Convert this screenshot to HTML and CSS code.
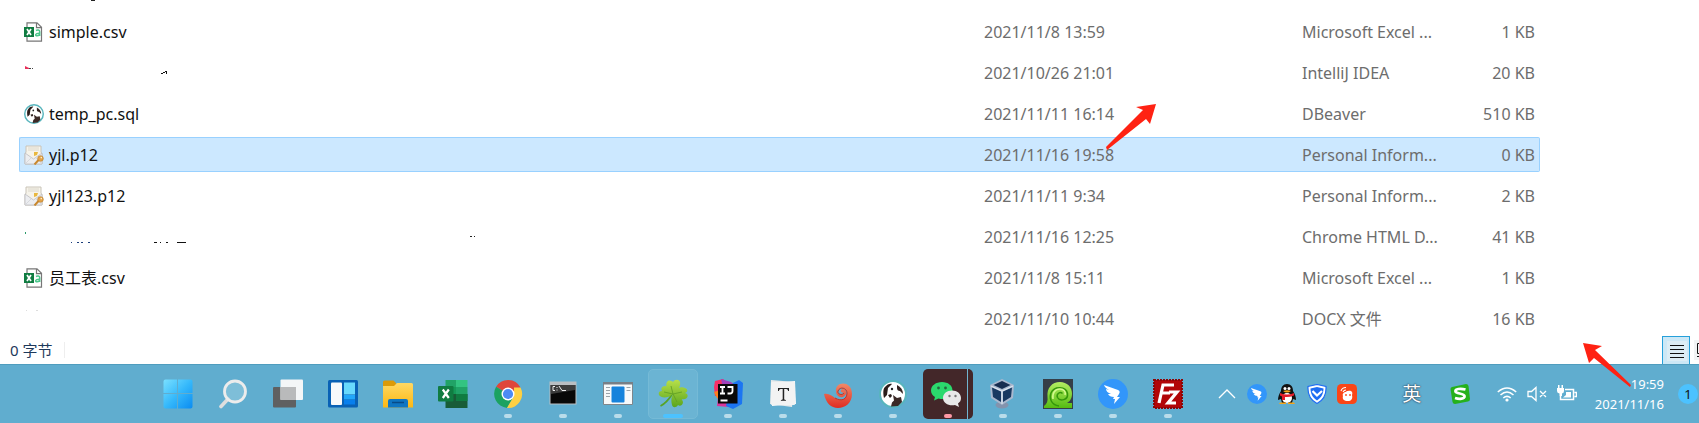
FILE: index.html
```
<!DOCTYPE html>
<html lang="zh-CN">
<head>
  <meta charset="UTF-8">
  <meta name="viewport" content="width=device-width, initial-scale=1.0">
  <title>Explorer</title>
  <link rel="stylesheet" href="styles.css">
</head>
<body>

  <!-- shared icons -->
  <svg class="defs" aria-hidden="true">
    <defs>
      <linearGradient id="winBlue" x1="0" y1="0" x2="1" y2="1">
        <stop offset="0" stop-color="#7ae0ff"/><stop offset=".5" stop-color="#36b9fb"/><stop offset="1" stop-color="#0a8cf2"/>
      </linearGradient>
      <linearGradient id="folder" x1="0" y1="0" x2="0" y2="1">
        <stop offset="0" stop-color="#ffd863"/><stop offset="1" stop-color="#fdb813"/>
      </linearGradient>
      <linearGradient id="leaf" x1="0" y1="0" x2="0" y2="1">
        <stop offset="0" stop-color="#b8e04a"/><stop offset="1" stop-color="#5aa51e"/>
      </linearGradient>
      <linearGradient id="shell" x1="0" y1="0" x2="0" y2="1">
        <stop offset="0" stop-color="#f08a68"/><stop offset="1" stop-color="#e02b22"/>
      </linearGradient>
      <linearGradient id="lime" x1="0" y1="0" x2="0" y2="1">
        <stop offset="0" stop-color="#b4ee62"/><stop offset="1" stop-color="#55bb12"/>
      </linearGradient>
      <symbol id="csv" viewBox="0 0 20 20">
        <path d="M3 .8h10l4.500 4.400v14H3z" fill="#fff" stroke="#777" stroke-width="1.200"/>
        <path d="M12.500 1v4.700h5" fill="none" stroke="#777" stroke-width="1.200"/>
        <path d="M0 5h10v10H0z" fill="#107c41"/>
        <path d="M3 7l4 6M7 7l-4 6" stroke="#fff" stroke-width="1.700"/>
        <path d="M12 8.500c1.300-.8 3.700-.7 3.700 1.200v4.300M15.700 11.200c-5-.3-4.700 2.800-2.600 2.600 1.500 0 2.600-1 2.600-2" fill="none" stroke="#4cc88c" stroke-width="1.500"/>
      </symbol>
      <symbol id="beaver" viewBox="0 0 28 28">
        <circle cx="14" cy="14" r="13" fill="#fff" stroke="#58b5bd" stroke-width="2"/>
        <path d="M6 7c2-3 6-4 7-3L9 8l-1 7-3 3c-1-5-1-9 1-11z" fill="#2b1d1a"/>
        <path d="M14 15l4 3 4-1 1 5-4 4-7 .500 1-4 2-2z" fill="#3b2926"/>
        <path d="M18 5c4 2 6 5 6 9l-3-3c-2 0-3-1-3-3z" fill="#32211f"/>
        <circle cx="13" cy="9" r="1.200" fill="#222"/>
        <path d="M9 15l3-1 1 2-2 2z" fill="#2b1d1a"/>
      </symbol>
      <symbol id="cert" viewBox="0 0 20 20">
        <path d="M2 7V1h15v6l1 2v10H1V9z" fill="#f6f3ea" stroke="#c9c4b8"/>
        <path d="M4 3h11M4 5h11" stroke="#dcd8cc"/>
        <path d="M10 7h4l-1 3-3 1z" fill="#e9b83e"/>
        <path d="M1 8l8.500 6L18 8v11H1z" fill="#ecedf0" stroke="#bcbcc2" stroke-width=".8"/>
        <path d="M1 19l6.500-6.500M18 19l-6.500-6.500" stroke="#d2d3d8" stroke-width=".8"/>
        <path d="M15 14.500l-4.500 5" stroke="#c9882e" stroke-width="2"/>
        <circle cx="16.500" cy="13.500" r="2.800" fill="#e3a348" stroke="#b77a27" stroke-width=".6"/>
        <circle cx="17.300" cy="12.600" r=".8" fill="#fff2cf"/>
      </symbol>
      <symbol id="wing" viewBox="0 0 30 30">
        <circle cx="15" cy="15" r="15" fill="#3296fa"/>
        <path d="M6 6l14 5c2 1 2 2 1 4l-2 3h3l-6 7 1-5h-2l1-2c-3 0-5-1-6-3l3 0c-3-1-5-3-5-5l3 1C8 9 6.500 8 6 6z" fill="#fff"/>
      </symbol>
    </defs>
  </svg>

  <!-- file list -->
  <main class="explorer">
    <svg class="cut-line" viewBox="0 0 8 2" aria-hidden="true"><path d="M1 0h4v1H1z" fill="#222"/></svg>
    <table class="files">
      <colgroup><col><col class="col-date"><col class="col-type"><col class="col-size"></colgroup>
      <tbody>
        <tr>
          <td><div class="name"><svg class="file-icon"><use href="#csv"/></svg>simple.csv</div></td>
          <td>2021/11/8 13:59</td><td>Microsoft Excel ...</td><td class="size">1 KB</td>
        </tr>
        <tr>
          <td><svg class="scraps" viewBox="0 0 460 20" aria-hidden="true"><path d="M1 3l4 2v1H1z" fill="#e8305a"/><path d="M5 5h2v1H5zM8 5h1v1H8z" fill="#444"/><path d="M137 10h2v1h-2zM139 9h2v1h-2zM141 8h2v3h-1V9h-1z" fill="#111"/></svg></td>
          <td>2021/10/26 21:01</td><td>IntelliJ IDEA</td><td class="size">20 KB</td>
        </tr>
        <tr>
          <td><div class="name"><svg class="file-icon"><use href="#beaver"/></svg>temp_pc.sql</div></td>
          <td>2021/11/11 16:14</td><td>DBeaver</td><td class="size">510 KB</td>
        </tr>
        <tr class="selected">
          <td><div class="name"><svg class="file-icon"><use href="#cert"/></svg>yjl.p12</div></td>
          <td>2021/11/16 19:58</td><td>Personal Inform...</td><td class="size">0 KB</td>
        </tr>
        <tr>
          <td><div class="name"><svg class="file-icon"><use href="#cert"/></svg>yjl123.p12</div></td>
          <td>2021/11/11 9:34</td><td>Personal Inform...</td><td class="size">2 KB</td>
        </tr>
        <tr>
          <td><svg class="scraps" viewBox="0 0 460 20" aria-hidden="true"><path d="M1 5h1v2H1z" fill="#2c9a6a"/><path d="M446 9h2v1h-2zM450 9h1v1h-1z" fill="#222"/><path d="M47 15h1v1h-1zM53 15h2v1h-2zM57 15h2v1h-2zM64 15h2v1h-2z" fill="#1b3d7a"/><path d="M130 15h3v1h-3zM136 15h1v1h-1zM142 15h2v1h-2zM153 15h9v1h-9z" fill="#111"/></svg></td>
          <td>2021/11/16 12:25</td><td>Chrome HTML D...</td><td class="size">41 KB</td>
        </tr>
        <tr>
          <td><div class="name"><svg class="file-icon"><use href="#csv"/></svg>员工表.csv</div></td>
          <td>2021/11/8 15:11</td><td>Microsoft Excel ...</td><td class="size">1 KB</td>
        </tr>
        <tr>
          <td><svg class="scraps" viewBox="0 0 460 20" aria-hidden="true"><path d="M2 1h1v1H2zM12 1h2v1h-2z" fill="#ddd"/></svg></td>
          <td>2021/11/10 10:44</td><td>DOCX 文件</td><td class="size">16 KB</td>
        </tr>
      </tbody>
    </table>
    <svg class="arrow arrow-list" viewBox="0 0 52 48" aria-hidden="true"><path d="M51 1L31 4l7 3L1 44l1 3 39-31 4 5z"/></svg>
  </main>

  <footer class="status">
    <span class="status-text">0 字节</span>
    <button class="view active" aria-label="详细信息"><svg viewBox="0 0 20 20"><path d="M3 4.500h14M3 8.500h14M3 12.500h14M3 16.500h14" stroke="#111" stroke-width="1"/></svg></button>
    <button class="view view-large" aria-label="大图标"><svg viewBox="0 0 20 20"><path d="M3.500 3.500h13v10h-13zM3 16.500h14" fill="none" stroke="#111"/></svg></button>
  </footer>

  <nav class="taskbar">
    <div class="apps">
      <button class="app" aria-label="开始"><svg viewBox="0 0 30 30"><path d="M2.500.500H14V14H.500V2.500a2 2 0 0 1 2-2zM15 .500h12.500a2 2 0 0 1 2 2V14H15zM.500 15H14v14.500H2.500a2 2 0 0 1-2-2zM15 15h14.500v12.500a2 2 0 0 1-2 2H15z" fill="url(#winBlue)"/></svg></button>
      <button class="app" aria-label="搜索"><svg viewBox="0 0 30 30"><path d="M10 20l-7 7.500" stroke="#dedede" stroke-width="3.600" stroke-linecap="round"/><circle cx="17" cy="12.500" r="10.500" fill="#9ccfe2" fill-opacity=".5" stroke="#ececec" stroke-width="2.800"/></svg></button>
      <button class="app" aria-label="任务视图"><svg viewBox="0 0 30 30"><rect y="8" width="23" height="20.500" rx="1" fill="#5f6061"/><rect x="7.500" y=".500" width="22.500" height="20.500" rx="1" fill="#f4f6f7"/><path d="M7.500 8H23v13H7.500z" fill="#b9babb"/></svg></button>
      <button class="app" aria-label="小组件"><svg viewBox="0 0 30 30"><rect y="1" width="30" height="27.500" rx="1.500" fill="#0961b5"/><rect x="3" y="3.500" width="11" height="22.500" rx="1" fill="#f7f9fb"/><path d="M16 3.500h11v12H16z" fill="#68d9fd"/><path d="M16 16h11v4.500H16z" fill="#22a7fa"/><path d="M16 21h11v4.500H16z" fill="#087fed"/></svg></button>
      <button class="app" aria-label="文件资源管理器"><svg viewBox="0 0 30 30"><path d="M0 7V3a1.500 1.500 0 0 1 1.500-1.500h9L13 4v4H0z" fill="#dc9a08"/><path d="M0 7h11l3-3h14.500A1.500 1.500 0 0 1 30 5.500v23H0z" fill="url(#folder)"/><path d="M5 28.500V22a2 2 0 0 1 2-2h16a2 2 0 0 1 2 2v6.500z" fill="#0f75c2"/><path d="M9 23.500h12" stroke="#084b87" stroke-width="1.500"/></svg></button>
      <button class="app" aria-label="Excel"><svg viewBox="0 0 30 30"><path d="M7.500 1H18v9H7.500z" fill="#21a366"/><path d="M18 1h11.500v7H18z" fill="#33c481"/><path d="M7.500 8H18v7H7.500z" fill="#159957"/><path d="M18 8h11.500v7H18z" fill="#21a366"/><path d="M7.500 15h22v14h-22z" fill="#185c37"/><path d="M18 15h11.500v7H18z" fill="#107c41"/><rect y="7" width="15.500" height="15.500" rx="1" fill="#107c41"/><path d="M4.800 10.500l6 8.500M10.800 10.500l-6 8.500" stroke="#fff" stroke-width="2.200"/></svg></button>
      <button class="app running" aria-label="Chrome"><svg viewBox="0 0 30 30"><path d="M15 15L3.100 7.800A14 14 0 0 1 27.500 8.500z" fill="#df463a"/><path d="M3.100 7.800A14 14 0 0 0 14 28.900L20.500 18 15 15z" fill="#1ba261"/><path d="M27.500 8.500A14 14 0 0 1 14 28.900L21 17V8.500z" fill="#ffd042"/><circle cx="15" cy="15" r="6.500" fill="#fff"/><circle cx="15" cy="15" r="5.100" fill="#4c8bf5"/></svg></button>
      <button class="app running" aria-label="命令提示符"><svg viewBox="0 0 30 30"><path d="M1.500 2.500h27v23h-27z" fill="#b9bec2"/><path d="M2.500 6h25v18.500h-25z" fill="#080808"/><path d="M3 6h24v5L3 15z" fill="#3c3c3c"/><path d="M7 7.500H5v4h2M9 8v1M9 10.500v1M11 7l3 4.500M14 11.500h4" fill="none" stroke="#eee"/></svg></button>
      <button class="app running" aria-label="应用窗口"><svg viewBox="0 0 30 30"><path d="M.500 3.500h29v22H.500z" fill="#f7f9fa" stroke="#7f868b"/><path d="M0 3h30v2.500H0z" fill="#777f87"/><rect x="8.500" y="7.500" width="13" height="16" rx="1" fill="#1683dc"/><path d="M3 8.500h4M3 11.500h4M3 14.500h4M3 17.500h4M23.500 8.500h4M23.500 11.500h4" stroke="#9ca4aa"/></svg></button>
      <button class="app running current" aria-label="三叶草"><svg viewBox="0 0 30 30"><path d="M15 14C13 17 9 24 2.500 27" fill="none" stroke="#58a326" stroke-width="1.800"/><path d="M15 15C9 12 7 6 9 3c2-3 5-1 6 0 2-3 6-3 7 0 1 4-2 9-7 12zM15 15C9 20 3 19 1 16c-1-3 1-4 3-4-2-3 1-5 3-5 4 1 7 4 8 8zM15 15c2-5 8-8 12-6 3 1 3 4 0 5 4 1 3 5 0 6-4 1-9-1-12-5zM15 15c5 1 9 4 10 8 0 3-3 5-5 3-2 3-5 3-6 0-1-4-1-7 1-11z" fill="url(#leaf)"/><path d="M15 15L13 7M15 15l-9-2M15 15l9-2M15 15l4 8" stroke="#5e9d24" stroke-width=".8"/></svg></button>
      <button class="app running" aria-label="IntelliJ IDEA"><svg viewBox="0 0 30 30"><path d="M2 2l8-2 10 9-9 8H2L1 8z" fill="#f62f68"/><path d="M1 13l6-2 4 13-7-5z" fill="#fc801d"/><path d="M5 18l8 2 3 8-12-1z" fill="#d9359a"/><path d="M18 5l8-4 4 3-1 21-9 5-7-3z" fill="#1b75f2"/><path d="M8 0l10 3 7 6H10z" fill="#a142bc"/><rect x="5" y="5" width="19.500" height="19.500" fill="#090909"/><path d="M7 8h5M9.500 8v6.500M7 14.500h5M14.500 8h5v4q0 2.500-2.500 2.500h-2.500M7.500 21.500h7" fill="none" stroke="#fff" stroke-width="1.800"/></svg></button>
      <button class="app running" aria-label="Typora"><svg viewBox="0 0 30 30"><path d="M3 1l24 2-3 25-22-3z" fill="#e7eaeb"/><path d="M4 4l23-2 1 23-24 2z" fill="#fafafa"/><rect x="3" y="3" width="24" height="23" rx="1" fill="#f3f3f3"/><path d="M10 12V9h11v3h-.800q-.300-2-2-2H16.200v10q0 1 1.700 1v.800h-5V21q1.800 0 1.800-1V10h-2q-1.600 0-1.900 2z" fill="#222"/></svg></button>
      <button class="app running" aria-label="Navicat"><svg viewBox="0 0 30 30"><path d="M1 15c5-1 8 2 11 4 6 4 12 1 12-5 0-5-7-7-9-2-1 3 4 5 6 2-2-1-4-1-3-3 2-3 6 0 5 4-2 5-10 4-10-3C12 2 29 1 29 15c0 9-7 14-14 14S3 24 1 15z" fill="url(#shell)"/><path d="M12 19c7 4 12 1 12-5 0-5-7-7-9-2-1 3 4 5 6 2" fill="none" stroke="#bd3529" stroke-width="1"/></svg></button>
      <button class="app running" aria-label="DBeaver"><svg viewBox="0 0 30 30"><use href="#beaver" x="1" y="1" width="28" height="28"/></svg></button>
      <button class="app running alert" aria-label="微信"><svg viewBox="0 0 30 30"><path d="M11 3C5 3 0 6.500 0 11.500c0 3 1.500 5 4 6.500l-1 3.500 4.500-2c8 2 14-2 14-8C21.500 6.500 17 3 11 3z" fill="#2bd96d"/><path d="M21 11.500c-5 0-9 3-9 7.500 0 5 6 8.500 12 7l4 2-1-3.500c2-1.500 3-3 3-5.500 0-4.500-4-7.500-9-7.500z" fill="#e8e8e8"/><circle cx="7.500" cy="9" r="1.400" fill="#25683f"/><circle cx="14.500" cy="9" r="1.400" fill="#25683f"/><circle cx="18.500" cy="17" r="1.200" fill="#777"/><circle cx="24.500" cy="17" r="1.200" fill="#777"/></svg></button>
      <button class="app running" aria-label="VirtualBox"><svg viewBox="0 0 30 30"><ellipse cx="14" cy="26" rx="6.500" ry="3.500" fill="#8393ad"/><path d="M2 6L14 0l12 6-1 13-11 7-11-7z" fill="#a9b8ce"/><path d="M5.500 6L14 2l8.500 4L14 10z" fill="#172d50"/><path d="M4 8.500l9 4V23l-8-5zM24 8.500l-9 4V23l8-5z" fill="#193961"/><path d="M3 7l11 5 11-5M14 12v13" fill="none" stroke="#dde5ef" stroke-width="1.200"/></svg></button>
      <button class="app running" aria-label="螺旋"><svg viewBox="0 0 30 30"><path d="M0 0h30v30H0z" fill="#353e48"/><path d="M1 29V27c3-2 4-5 3.500-9C3.500 9 9 3 17 3c7 0 12 5 12 11.500 0 5-2 8-5 9.500h5v5z" fill="url(#lime)"/><path d="M16 27c-8-1-10-8-8-13 3-7 15-7 16.500.500C25.500 21 17 23 14.500 18.500 13 15 17 12 19.500 14.500" fill="none" stroke="#35960c" stroke-width="1.500"/><path d="M10 20c-1-6 2-10 7-10 4 0 6 3 5 6" fill="none" stroke="#d4fa8f" stroke-width="1.500"/></svg></button>
      <button class="app running" aria-label="钉钉"><svg viewBox="0 0 30 30"><use href="#wing"/></svg></button>
      <button class="app running" aria-label="FileZilla"><svg viewBox="0 0 30 30"><path d="M1 1h28v28H1z" fill="#b20608" stroke="#8c0507" stroke-width="2" stroke-dasharray="2 1"/><path d="M6 24L10 6h11M8.500 14H17M16 13h8l-9 11h8" fill="none" stroke="#fff" stroke-width="3.200"/></svg></button>
    </div>

    <div class="tray">
      <button class="tray-item" aria-label="显示隐藏的图标"><svg viewBox="0 0 20 20"><path d="M2 14l8-8 8 8" fill="none" stroke="#fff" stroke-width="1.300"/></svg></button>
      <button class="tray-item" aria-label="钉钉"><svg viewBox="0 0 20 20"><use href="#wing"/></svg></button>
      <button class="tray-item" aria-label="QQ"><svg viewBox="0 0 20 20"><path d="M10 0c4 0 6 3 6 7 2 3 3 6 3 9l-3-1-1 4H5l-1-4-3 1c0-3 1-6 3-9 0-4 2-7 6-7z" fill="#111"/><ellipse cx="10" cy="14" rx="5" ry="5" fill="#fff"/><circle cx="8" cy="4.500" r="1.500" fill="#fff"/><circle cx="12" cy="4.500" r="1.500" fill="#fff"/><path d="M6 7q4-1.500 8 0-4 3-8 0z" fill="#f5a51b"/><path d="M3 9q7 3 14 0v2.500q-5 2-9 1.500v3H5v-3.500l-2-1z" fill="#e31c2a"/><path d="M3 18.500h6v1.500H2zM11 18.500h6l1 1.500h-7z" fill="#f5a51b"/></svg></button>
      <button class="tray-item" aria-label="电脑管家"><svg viewBox="0 0 20 20"><path d="M10 .500l9 2C19.500 10 17 16 10 19.500 3 16 .500 10 1 2.500z" fill="#fff" stroke="#1f6df2" stroke-width="1.200"/><path d="M10 3l6.500 1.500c0 5-2 9-6.500 12-4.500-3-6.500-7-6.500-12z" fill="#1f6df2"/><path d="M5.500 7l4.500 4.500L15 7" fill="none" stroke="#fff" stroke-width="2.200"/></svg></button>
      <button class="tray-item" aria-label="向日葵"><svg viewBox="0 0 20 20"><rect width="20" height="20" rx="4.500" fill="#fb4617"/><path d="M11 7c4-1 5 2 4 4 1 4-1 6-4 6-4 0-6-2-5-5-1-2 1-4 3-4 0-1 1-1 2-1z" fill="#fff"/><path d="M4 7q1-3.500 5-3.500M6 8q1-2 3-2" fill="none" stroke="#fff" stroke-width="1.100"/><circle cx="9" cy="11" r=".9" fill="#fb4617"/><circle cx="13" cy="11" r=".9" fill="#fb4617"/></svg></button>
      <button class="tray-item ime" aria-label="输入法">英</button>
      <button class="tray-item sogou" aria-label="搜狗输入法"><svg viewBox="0 0 20 20"><path d="M2 3l14-3q2 0 2.500 2L20 15q0 2-2 2.500L5 20q-2 0-2.500-2L.500 5Q.500 3.500 2 3z" fill="#25b11c"/><path d="M15.500 5.500C10 4 5 5 5.500 7.500 6 10 14 9 14.500 12c.500 3-5 3.500-9.500 2" fill="none" stroke="#fff" stroke-width="2.800"/></svg></button>
      <button class="tray-item" aria-label="网络"><svg viewBox="0 0 20 20"><g fill="none" stroke="#fff" stroke-width="1.500"><path d="M.800 8q9.200-8 18.400 0M3.500 11q6.500-6 13 0M6.300 14q3.700-3.300 7.400 0"/></g><circle cx="10" cy="16" r="1.600" fill="#fff"/></svg></button>
      <button class="tray-item" aria-label="音量"><svg viewBox="0 0 20 20"><path d="M1 7.500h3.500L9 3.500v13l-4.500-4H1zM13 7l6 6M19 7l-6 6" fill="none" stroke="#fff" stroke-width="1.300"/></svg></button>
      <button class="tray-item" aria-label="电池"><svg viewBox="0 0 20 20"><path d="M8 5.500h8.500v10h-13V12M17.500 8.500h2v4h-2" fill="none" stroke="#fff" stroke-width="1.500"/><path d="M9 8h5v5.500H6L9 11z" fill="#fff"/><path d="M0 4h7v3q0 2-2 2.500V12H2.500V9.500Q0 9 0 7zM1 1h1.500v3H1zM4.500 1H6v3H4.500z" fill="#fff"/></svg></button>
      <button class="clock"><span>19:59</span><span>2021/11/16</span></button>
      <button class="badge" aria-label="1 条通知">1</button>
    </div>
    <svg class="arrow arrow-clock" viewBox="0 0 50 48" aria-hidden="true"><path d="M1 1l19 3-7 4 36 35-1 2L12 16l-5 5z"/></svg>
  </nav>

</body>
</html>
```

FILE: styles.css
```
* { box-sizing: border-box; }
body {
  margin: 0;
  background: #fff;
  font-family: "Noto Sans", "Noto Sans CJK SC", sans-serif;
  font-size: 16px;
  color: #111;
  overflow: hidden;
}
button {
  padding: 0;
  border: none;
  background: none;
  font: inherit;
  color: inherit;
  cursor: pointer;
}
svg { display: block; }
.defs {
  position: absolute;
  width: 0;
  height: 0;
}

/* file list */
.explorer {
  position: relative;
  padding: 8px 159px 0 19px;
}
.cut-line {
  position: absolute;
  top: 0;
  left: 90px;
  width: 8px;
  height: 2px;
}
.files {
  width: 100%;
  table-layout: fixed;
  border-spacing: 0 6px;
  color: #6d6d6d;
}
.col-date { width: 318px; }
.col-type { width: 141px; }
.col-size { width: 102px; }
.files td {
  height: 35px;
  padding: 0 4px 0 5px;
  border: solid transparent;
  border-width: 1px 0;
  line-height: 24px;
  white-space: nowrap;
}
.files td:first-child {
  padding-left: 4px;
  border-left-width: 1px;
}
.files td:last-child { border-right-width: 1px; }
.files .size { text-align: right; }
.files .selected td {
  background: #cce8ff;
  border-color: #99d1ff;
}
.selected td:first-child { border-radius: 2px 0 0 2px; }
.selected td:last-child { border-radius: 0 2px 2px 0; }
.name {
  display: flex;
  align-items: center;
  gap: 5px;
  color: #111;
}
.file-icon {
  width: 20px;
  height: 20px;
}
.scraps {
  width: 460px;
  height: 20px;
}

/* status bar */
.status {
  display: flex;
  align-items: center;
  height: 28px;
  margin-top: -6px;
  padding-left: 10px;
  overflow: hidden;
}
.status-text {
  margin-right: auto;
  padding-right: 12px;
  border-right: 1px solid #eee;
  font-size: 15px;
  line-height: 16px;
  color: #1e395b;
}
.view {
  flex: none;
  width: 28px;
  height: 28px;
  padding: 4px;
}
.view svg {
  width: 20px;
  height: 20px;
  background: #f1f3f4;
}
.active {
  background: #cce8f6;
  border: 1px solid #26a0da;
  border-bottom: none;
}
.active svg { background: #dcedf5; }
.view-large { margin-right: -19px; }

/* taskbar */
.taskbar {
  position: relative;
  display: flex;
  align-items: center;
  justify-content: space-between;
  height: 59px;
  padding-left: 153px;
  background: #60adcf;
  border-top: 1px solid #4f9dbe;
}
.apps {
  display: flex;
  gap: 5px;
}
.app {
  position: relative;
  display: flex;
  align-items: center;
  justify-content: center;
  width: 50px;
  height: 50px;
  border-radius: 5px;
}
.app svg {
  width: 30px;
  height: 30px;
}
.running::after {
  content: "";
  position: absolute;
  left: 21px;
  bottom: 1px;
  width: 8px;
  height: 4px;
  border-radius: 2px;
  background: #b9dcea;
}
.current {
  background: #6bb4d3;
  border: 1px solid #75bad6;
}
.current::after {
  left: 14px;
  bottom: 0;
  width: 20px;
  background: #4cc2ff;
}
.alert {
  background: #432729;
  border-right: 5px solid #432729;
  box-shadow: inset -1px 0 #71b4cf;
}
.alert::after { background: #ff99a4; }

.tray {
  display: flex;
  align-items: center;
  gap: 10px;
  color: #fff;
}
.tray-item {
  width: 20px;
  height: 20px;
}
.tray-item svg {
  width: 20px;
  height: 20px;
}
.ime {
  margin-left: 35px;
  font-size: 19px;
  line-height: 20px;
  text-shadow: 0 0 2px #234, 0 0 1px #234;
}
.sogou { margin: 0 17px 0 18px; }
.clock {
  display: flex;
  flex-direction: column;
  align-items: flex-end;
  margin-left: 8px;
  font-size: 13px;
  line-height: 20px;
}
.badge {
  width: 20px;
  height: 20px;
  margin: 0 1px 0 4px;
  border-radius: 50%;
  background: #4cc2ff;
  font-size: 13px;
  line-height: 20px;
  color: #111;
}

/* red pointers lying over the page */
.arrow {
  position: absolute;
  fill: #ff2213;
}
.arrow-list {
  top: 103px;
  right: 542px;
  width: 52px;
  height: 48px;
}
.arrow-clock {
  top: -23px;
  right: 67px;
  width: 50px;
  height: 48px;
}
```
